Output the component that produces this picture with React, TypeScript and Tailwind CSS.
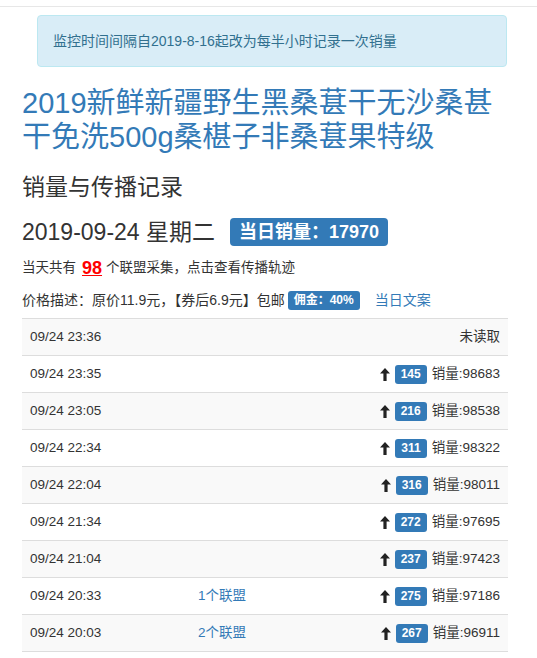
import React from "react";

interface Row {
  time: string;
  link?: string;
  inc?: number;
  total?: number;
}

const rows: Row[] = [
  { time: "09/24 23:36" },
  { time: "09/24 23:35", inc: 145, total: 98683 },
  { time: "09/24 23:05", inc: 216, total: 98538 },
  { time: "09/24 22:34", inc: 311, total: 98322 },
  { time: "09/24 22:04", inc: 316, total: 98011 },
  { time: "09/24 21:34", inc: 272, total: 97695 },
  { time: "09/24 21:04", inc: 237, total: 97423 },
  { time: "09/24 20:33", link: "1个联盟", inc: 275, total: 97186 },
  { time: "09/24 20:03", link: "2个联盟", inc: 267, total: 96911 },
];

function ArrowUp() {
  return (
    <svg width="10" height="13" viewBox="0 0 10 13" className="shrink-0">
      <path d="M5 0 L10 5.4 L6.6 5.4 L6.6 13 L3.4 13 L3.4 5.4 L0 5.4 Z" fill="#222" />
    </svg>
  );
}

export default function App() {
  return (
    <div
      className="bg-white text-[#333] min-h-[658px]"
      style={{ fontFamily: '"Liberation Sans", "Noto Sans CJK SC", sans-serif' }}
    >
      {/* navbar edge */}
      <div className="h-[7px] border-b border-[#e7e7e7]" />

      <div className="px-[22px] pr-[29px]">
        {/* notice */}
        <div className="mt-[8px] ml-[15px] mr-[1px] rounded border border-[#bce8f1] bg-[#d9edf7] px-[15px] py-[15px] text-[14px] leading-[20px] text-[#31708f]">
          监控时间间隔自2019-8-16起改为每半小时记录一次销量
        </div>

        <h1 className="mt-[19px] text-[29px] leading-[34px] text-[#337ab7]">
          2019新鲜新疆野生黑桑葚干无沙桑甚干免洗500g桑椹子非桑葚果特级
        </h1>

        <h3 className="mt-[20px] text-[23px] leading-[26px]">销量与传播记录</h3>

        <div className="mt-[17px] flex items-center h-[30px] text-[23px]">
          <span>2019-09-24 星期二</span>
          <span className="ml-[15px] rounded-[4px] bg-[#337ab7] px-[9px] h-[28px] flex items-center text-[18px] font-bold text-white">
            当日销量：17970
          </span>
        </div>

        <div className="mt-[10px] flex items-center h-[22px] text-[13.5px]">
          <span>当天共有</span>
          <span className="ml-[6px] mr-[4px] text-[18px] font-bold text-[#ff0000] underline">98</span>
          <span>个联盟采集，点击查看传播轨迹</span>
        </div>

        <div className="mt-[10px] flex items-center h-[22px] text-[14px]">
          <span>价格描述：原价11.9元，【券后6.9元】包邮</span>
          <span className="ml-[3px] rounded-[3px] bg-[#337ab7] px-[6px] h-[19px] flex items-center text-[12px] font-bold text-white">
            佣金：40%
          </span>
          <span className="ml-[15px] text-[#337ab7]">当日文案</span>
        </div>

        {/* records table */}
        <div className="mt-[7px] text-[13.5px]">
          {rows.map((r, i) => (
            <div
              key={r.time}
              className={`grid grid-cols-[168px_1fr_auto] items-center h-[37px] border-t border-[#ddd] px-[8px] ${
                i % 2 === 0 ? "bg-[#f9f9f9]" : "bg-white"
              }`}
            >
              <span>{r.time}</span>
              <span className="text-[#337ab7]">{r.link ?? ""}</span>
              {r.inc === undefined ? (
                <span>未读取</span>
              ) : (
                <span className="flex items-center">
                  <ArrowUp />
                  <span className="ml-[5px] rounded-[3px] bg-[#337ab7] px-[6px] h-[19px] flex items-center text-[12px] font-bold text-white">
                    {r.inc}
                  </span>
                  <span className="ml-[5px]">销量:{r.total}</span>
                </span>
              )}
            </div>
          ))}
          <div className="border-t border-[#ddd]" />
        </div>
      </div>
    </div>
  );
}
